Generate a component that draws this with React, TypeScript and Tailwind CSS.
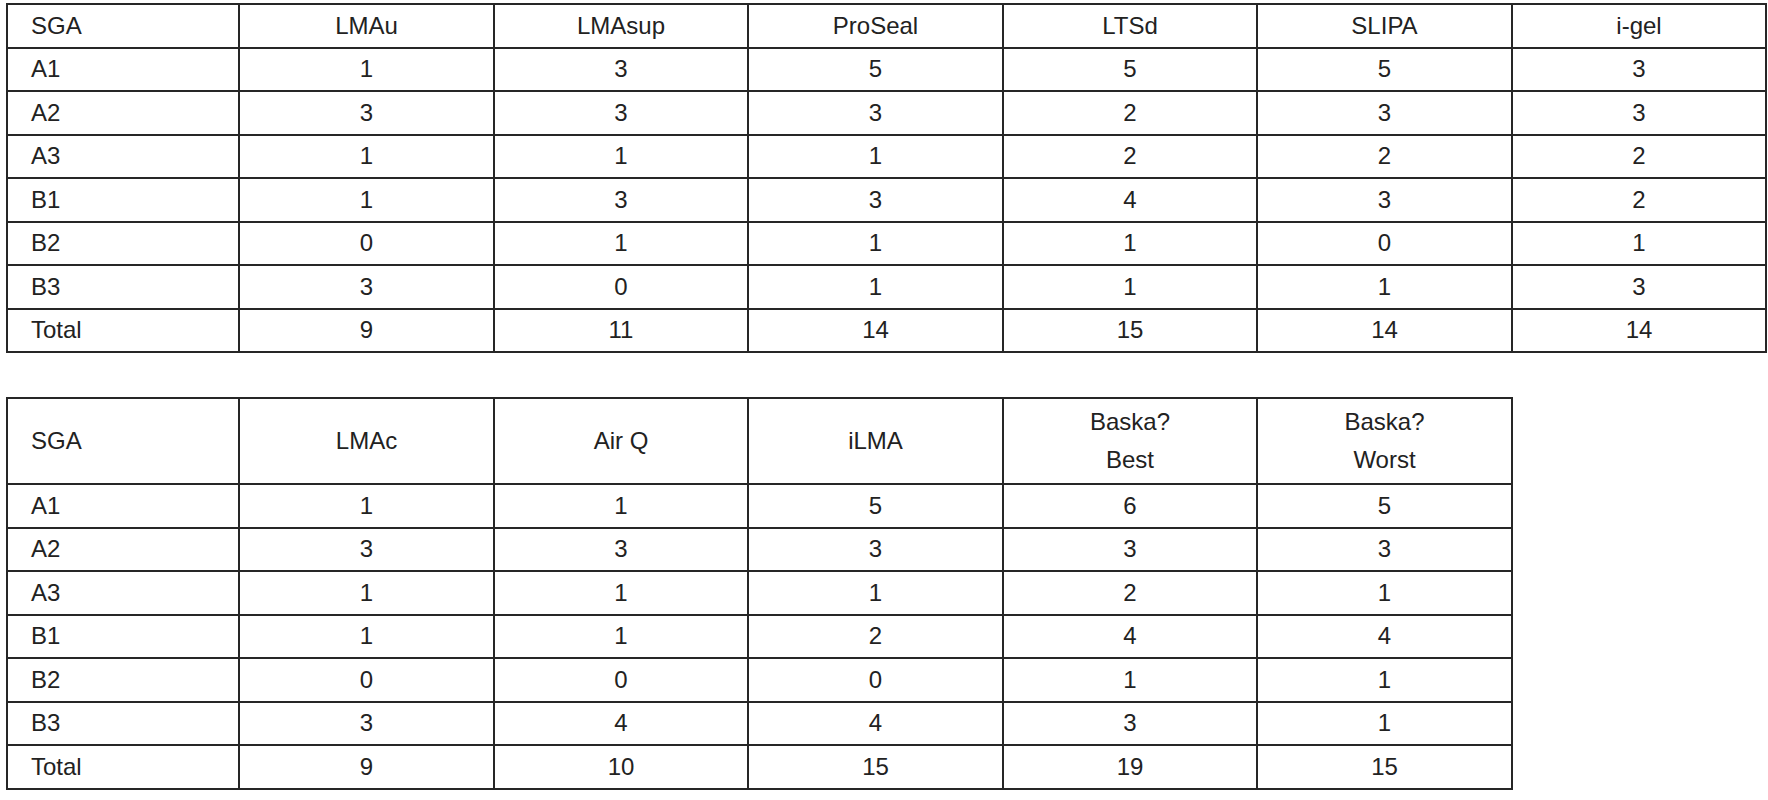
import React from "react";

const top = {
  head: ["SGA", "LMAu", "LMAsup", "ProSeal", "LTSd", "SLIPA", "i-gel"],
  rows: [
    ["A1", "1", "3", "5", "5", "5", "3"],
    ["A2", "3", "3", "3", "2", "3", "3"],
    ["A3", "1", "1", "1", "2", "2", "2"],
    ["B1", "1", "3", "3", "4", "3", "2"],
    ["B2", "0", "1", "1", "1", "0", "1"],
    ["B3", "3", "0", "1", "1", "1", "3"],
    ["Total", "9", "11", "14", "15", "14", "14"],
  ],
};

const bottom = {
  head: [["SGA"], ["LMAc"], ["Air Q"], ["iLMA"], ["Baska?", "Best"], ["Baska?", "Worst"]],
  rows: [
    ["A1", "1", "1", "5", "6", "5"],
    ["A2", "3", "3", "3", "3", "3"],
    ["A3", "1", "1", "1", "2", "1"],
    ["B1", "1", "1", "2", "4", "4"],
    ["B2", "0", "0", "0", "1", "1"],
    ["B3", "3", "4", "4", "3", "1"],
    ["Total", "9", "10", "15", "19", "15"],
  ],
};

function Cell({ children, first, tall }: { children: React.ReactNode; first?: boolean; tall?: boolean }) {
  return (
    <div
      className={
        "bg-white flex items-center " +
        (tall ? "h-[84px] " : "h-[41.5px] ") +
        (first ? "justify-start pl-[23px]" : "justify-center text-center")
      }
    >
      {children}
    </div>
  );
}

export default function App() {
  return (
    <div
      className="w-[1768px] h-[800px] bg-white text-[#222] text-[24px] leading-none overflow-hidden"
      style={{ fontFamily: '"Liberation Sans", Arial, sans-serif' }}
    >
      <div className="pt-[3px] pl-[6px]">
        <div className="inline-grid grid-cols-[230px_253px_252px_253px_252px_253px_252px] gap-[2px] p-[2px] bg-[#262626]">
          {top.head.map((h, i) => (
            <Cell key={"h" + i} first={i === 0}>
              {h}
            </Cell>
          ))}
          {top.rows.map((r, ri) =>
            r.map((c, ci) => (
              <Cell key={ri + "-" + ci} first={ci === 0}>
                {c}
              </Cell>
            ))
          )}
        </div>
        <div className="mt-[44px]">
          <div className="inline-grid grid-cols-[230px_253px_252px_253px_252px_253px] gap-[2px] p-[2px] bg-[#262626]">
            {bottom.head.map((h, i) => (
              <Cell key={"bh" + i} first={i === 0} tall>
                <div className="flex flex-col items-center leading-[38px]">
                  {h.map((l, li) => (
                    <span key={li}>{l}</span>
                  ))}
                </div>
              </Cell>
            ))}
            {bottom.rows.map((r, ri) =>
              r.map((c, ci) => (
                <Cell key={"b" + ri + "-" + ci} first={ci === 0}>
                  {c}
                </Cell>
              ))
            )}
          </div>
        </div>
      </div>
    </div>
  );
}
